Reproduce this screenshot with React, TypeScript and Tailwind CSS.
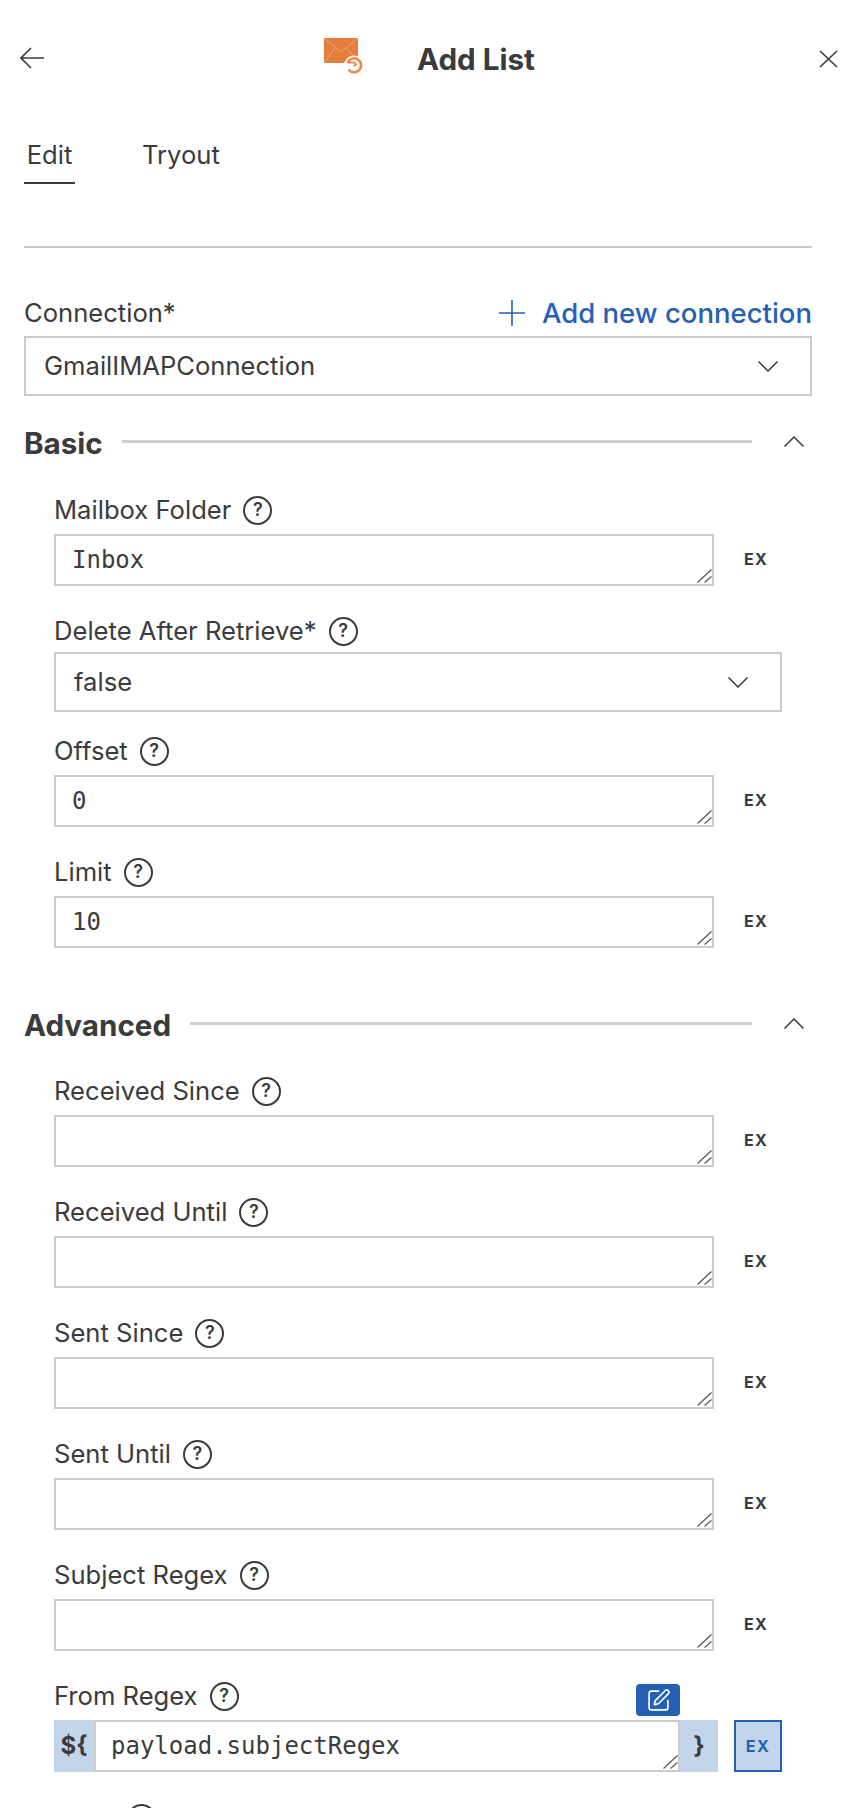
import { SquarePen } from "lucide-react";

const sans = "font-['Inter',sans-serif]";
const mono = "font-['DejaVu_Sans_Mono',monospace]";

function ChevronIcon({ up }: { up?: boolean }) {
  return (
    <svg width="20" height="11" viewBox="0 0 20 11" fill="none" stroke="#3b3b3b" strokeWidth="1.5">
      <path d={up ? "M0.5 10.5 10 1l9.5 9.5" : "M0.5 0.5 10 10l9.5-9.5"} />
    </svg>
  );
}

function MailIcon() {
  return (
    <svg width="40" height="37" viewBox="0 0 40 37" fill="none">
      <rect x="0" y="0" width="34" height="25" rx="1" fill="#e57d3d" />
      <path d="M1 1l16 13L33 1M1 24l10-14M33 24 23 10" stroke="#f0a878" strokeWidth="1" />
      <circle cx="30" cy="27.5" r="10" fill="#fff" />
      <path d="M23.5 25a7 7 0 1 1 1 6.5" stroke="#ec8a4e" strokeWidth="2.6" />
      <path d="M24 24.5h6.5l1.5 2-2.5 1.5" stroke="#ec8a4e" strokeWidth="2" />
    </svg>
  );
}

function Help() {
  return (
    <span className="flex h-[29px] w-[29px] shrink-0 items-center justify-center rounded-full border-2 border-[#3b3b3b] text-[18px] font-semibold leading-none text-[#3b3b3b]">
      ?
    </span>
  );
}

function Label({ text, className }: { text: string; className: string }) {
  return (
    <div className={"flex h-[30px] items-center gap-[12px] text-[25.6px] leading-[30px] text-[#3b3b3b] " + className}>
      <span>{text}</span>
      <Help />
    </div>
  );
}

function Grip() {
  return (
    <svg className="pointer-events-none absolute bottom-[3px] right-[2px]" width="15" height="14" viewBox="0 0 15 14" fill="none" stroke="#555555" strokeWidth="1.2">
      <path d="M0.5 13.5 14.5 0.5M7.5 13.5l7-6" />
    </svg>
  );
}

function TextRow({ label, value, className = "mt-[30px]" }: { label: string; value?: string; className?: string }) {
  return (
    <div className={className}>
      <Label text={label} className="mb-[9px]" />
      <div className="flex items-center">
        <div className="relative">
          <textarea
            readOnly
            defaultValue={value}
            className={"block h-[52px] w-[660px] resize-none border-2 border-[#cccccc] bg-white px-4 py-[10px] text-[24px] leading-[28px] text-[#3b3b3b] outline-none " + mono}
          />
          <Grip />
        </div>
        <span className="mb-[2px] ml-[30px] text-[16px] font-bold tracking-[1.4px] text-[#3b3b3b]">EX</span>
      </div>
    </div>
  );
}

function SectionHead({ title }: { title: string }) {
  return (
    <div className="flex h-[30px] items-center">
      <span className="text-[29.6px] font-bold leading-[30px] text-[#3b3b3b]">{title}</span>
      <div className="mb-1 ml-[19px] h-[3px] flex-1 bg-[#cfcfcf]" />
      <div className="mb-1 ml-8 mr-2 flex w-5 shrink-0">
        <ChevronIcon up />
      </div>
    </div>
  );
}

export default function App() {
  return (
    <div className={"h-screen overflow-hidden bg-white pb-0 pl-6 pr-12 text-[#3b3b3b] " + sans}>
      <header className="-ml-1 -mr-[26px] flex h-[116px] items-start justify-between pt-[38px]">
        <svg className="mt-[9px]" width="24" height="22" viewBox="0 0 24 22" fill="none" stroke="#3b3b3b" strokeWidth="1.6">
          <path d="M24 11H1M11 1 1 11l10 10" />
        </svg>
        <div className="mr-1 flex h-9 items-start gap-[53px]">
          <MailIcon />
          <h1 className="pt-[3px] text-[29.6px] font-bold leading-9 text-[#3b3b3b]">Add List</h1>
        </div>
        <svg className="mt-[12px]" width="19" height="18" viewBox="0 0 19 18" fill="none" stroke="#3b3b3b" strokeWidth="1.6">
          <path d="M1 1l17 16M18 1 1 17" />
        </svg>
      </header>

      <div className="flex h-[132px] items-start gap-[67px] border-b-2 border-[#c8c8c8] pt-6 text-[25.6px] leading-[30px]">
        <div className="flex h-[44px] w-[51px] flex-col items-center border-b-2 border-[#3b3b3b]">Edit</div>
        <div>Tryout</div>
      </div>

      <div className="mt-[50px] flex h-[30px] items-center justify-between">
        <span className="text-[25.6px] leading-[30px]">Connection*</span>
        <span className="flex items-center gap-[17px] text-[27.5px] font-medium leading-[30px] text-[#2560b5]">
          <svg width="26" height="26" viewBox="0 0 26 26" fill="none" stroke="#2560b5" strokeWidth="1.6">
            <path d="M13 0v26M0 13h26" />
          </svg>
          Add new connection
        </span>
      </div>
      <div className="mt-2 flex h-[60px] items-center justify-between border-2 border-[#cccccc] pl-[18px] pr-8 text-[25.6px]">
        <span>GmailIMAPConnection</span>
        <ChevronIcon />
      </div>

      <div className="mt-8">
        <SectionHead title="Basic" />
        <div className="pl-[30px]">
          <TextRow label="Mailbox Folder" value="Inbox" className="mt-[37px]" />
          <div className="mt-[30px]">
            <Label text="Delete After Retrieve*" className="mb-[6px]" />
            <div className="flex h-[60px] w-[728px] items-center justify-between border-2 border-[#cccccc] pl-[18px] pr-8 text-[25.6px]">
              <span>false</span>
              <ChevronIcon />
            </div>
          </div>
          <TextRow label="Offset" value="0" className="mt-6" />
          <TextRow label="Limit" value="10" />
        </div>
      </div>

      <div className="mt-[62px]">
        <SectionHead title="Advanced" />
        <div className="pl-[30px]">
          <TextRow label="Received Since" className="mt-9" />
          <TextRow label="Received Until" />
          <TextRow label="Sent Since" />
          <TextRow label="Sent Until" />
          <TextRow label="Subject Regex" />

          <div className="mt-[30px]">
            <div className="relative">
              <Label text="From Regex" className="mb-[9px]" />
              <button className="absolute right-[132px] top-[3px] flex h-8 w-11 items-center justify-center rounded bg-[#2560b5] text-white">
                <SquarePen size={25} strokeWidth={1.6} />
              </button>
            </div>
            <div className="flex items-center">
              <div className="flex h-[52px] w-[40px] items-center justify-center bg-[#c3d5ea] text-[24px] font-bold text-[#3b3b3b]">
                {"${"}
              </div>
              <div className="relative">
                <textarea
                  readOnly
                  defaultValue="payload.subjectRegex"
                  className={"block h-[52px] w-[586px] resize-none border-2 border-[#cccccc] bg-white px-[15px] py-[10px] text-[24px] leading-[28px] text-[#3b3b3b] outline-none " + mono}
                />
                <Grip />
              </div>
              <div className="flex h-[52px] w-[38px] items-center justify-center bg-[#c3d5ea] text-[24px] font-bold text-[#3b3b3b]">
                {"}"}
              </div>
              <div className="ml-4 flex h-[52px] w-12 items-center justify-center border-2 border-[#2560b5] bg-[#c3d5ea] text-[16px] font-bold tracking-[1.4px] text-[#2560b5]">
                EX
              </div>
            </div>
          </div>
          <Label text="Seen" className="mt-[31px]" />
        </div>
      </div>
    </div>
  );
}
